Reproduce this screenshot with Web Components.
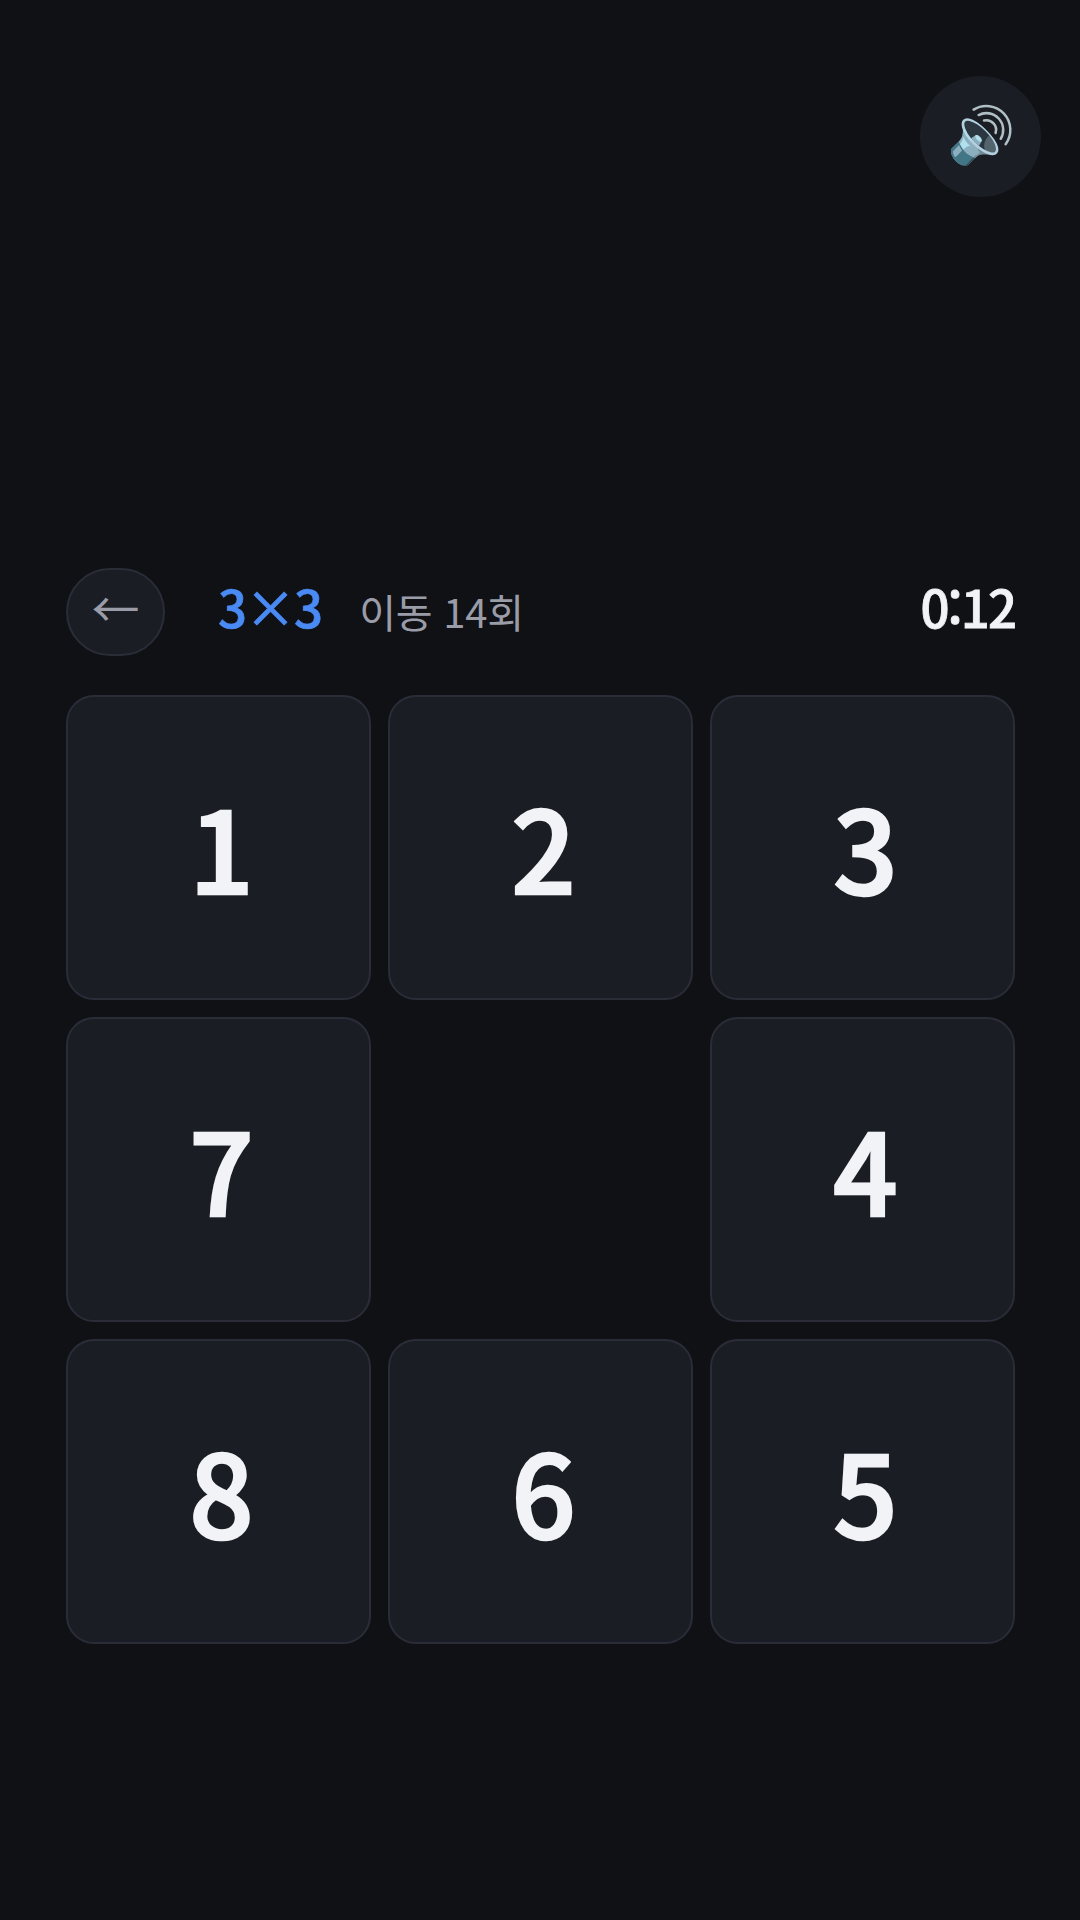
<!DOCTYPE html>
<html lang="ko">
<head>
<meta charset="utf-8">
<title>슬라이드 퍼즐</title>
<style>
  html,body{margin:0;padding:0;background:#0f1115}
  body{width:1080px;height:1920px;font-family:"Noto Sans CJK KR","Noto Sans",sans-serif;overflow:hidden}
</style>
</head>
<body>
<puzzle-app>
  <puzzle-tile>1</puzzle-tile>
  <puzzle-tile>2</puzzle-tile>
  <puzzle-tile>3</puzzle-tile>
  <puzzle-tile>7</puzzle-tile>
  <div></div>
  <puzzle-tile>4</puzzle-tile>
  <puzzle-tile>8</puzzle-tile>
  <puzzle-tile>6</puzzle-tile>
  <puzzle-tile>5</puzzle-tile>
</puzzle-app>
<script>
class SoundButton extends HTMLElement {
  connectedCallback() {
    const s = this.attachShadow({ mode: 'open' });
    s.innerHTML = `
      <style>
        :host{position:absolute;top:76px;right:39px;width:121px;height:121px;border-radius:50%;background:#1a1d24;display:flex;align-items:center;justify-content:center;font-size:55px;line-height:1}
        span{position:relative;top:-6px}
      </style>
      <span>🔊</span>`;
  }
}
class PuzzleHeader extends HTMLElement {
  connectedCallback() {
    const s = this.attachShadow({ mode: 'open' });
    s.innerHTML = `
      <style>
        :host{display:flex;align-items:center;height:88px}
        .back{width:99px;height:88px;padding-bottom:12px;box-sizing:border-box;border:2px solid #2a2d38;border-radius:44px;background:#1a1d24;color:#9a9ca8;display:flex;align-items:center;justify-content:center;font-size:48px;line-height:1}
        .info{flex:1;display:flex;align-items:baseline;margin:0 0 12px 53px}
        .size{font-size:51px;font-weight:500;-webkit-text-stroke:.6px #4a8af4;color:#4a8af4;line-height:1;letter-spacing:-2px}
        .moves{margin-left:38px;font-size:40px;color:#9a9ca8;line-height:1;letter-spacing:-.2px}
        .time{margin-left:auto;font-size:51px;font-weight:500;-webkit-text-stroke:.8px #f2f3f7;color:#f2f3f7;letter-spacing:-2px;line-height:1}
      </style>
      <div class="back">←</div>
      <div class="info">
        <div class="size">3×3</div>
        <div class="moves">이동 14회</div>
        <div class="time">0:12</div>
      </div>`;
  }
}
class PuzzleTile extends HTMLElement {
  connectedCallback() {
    const s = this.attachShadow({ mode: 'open' });
    s.innerHTML = `
      <style>
        :host{display:flex;align-items:center;justify-content:center;box-sizing:border-box;border:2px solid #2a2d38;border-radius:28px;background:#1a1d24;color:#f2f3f7;font-size:113px;font-weight:500;-webkit-text-stroke:2.6px #f2f3f7;line-height:1;letter-spacing:-6px}
        span{position:relative;top:-2px}
      </style>
      <span><slot></slot></span>`;
  }
}
class PuzzleApp extends HTMLElement {
  connectedCallback() {
    const s = this.attachShadow({ mode: 'open' });
    s.innerHTML = `
      <style>
        :host{display:block;position:relative;box-sizing:border-box;width:1080px;height:1920px;padding:568px 65px 0 66px}
        .board{display:grid;grid-template-columns:repeat(3,305px);grid-auto-rows:305px;gap:17px;margin-top:39px}
      </style>
      <sound-button></sound-button>
      <puzzle-header></puzzle-header>
      <div class="board"><slot></slot></div>`;
  }
}
customElements.define('sound-button', SoundButton);
customElements.define('puzzle-header', PuzzleHeader);
customElements.define('puzzle-tile', PuzzleTile);
customElements.define('puzzle-app', PuzzleApp);
</script>
</body>
</html>
